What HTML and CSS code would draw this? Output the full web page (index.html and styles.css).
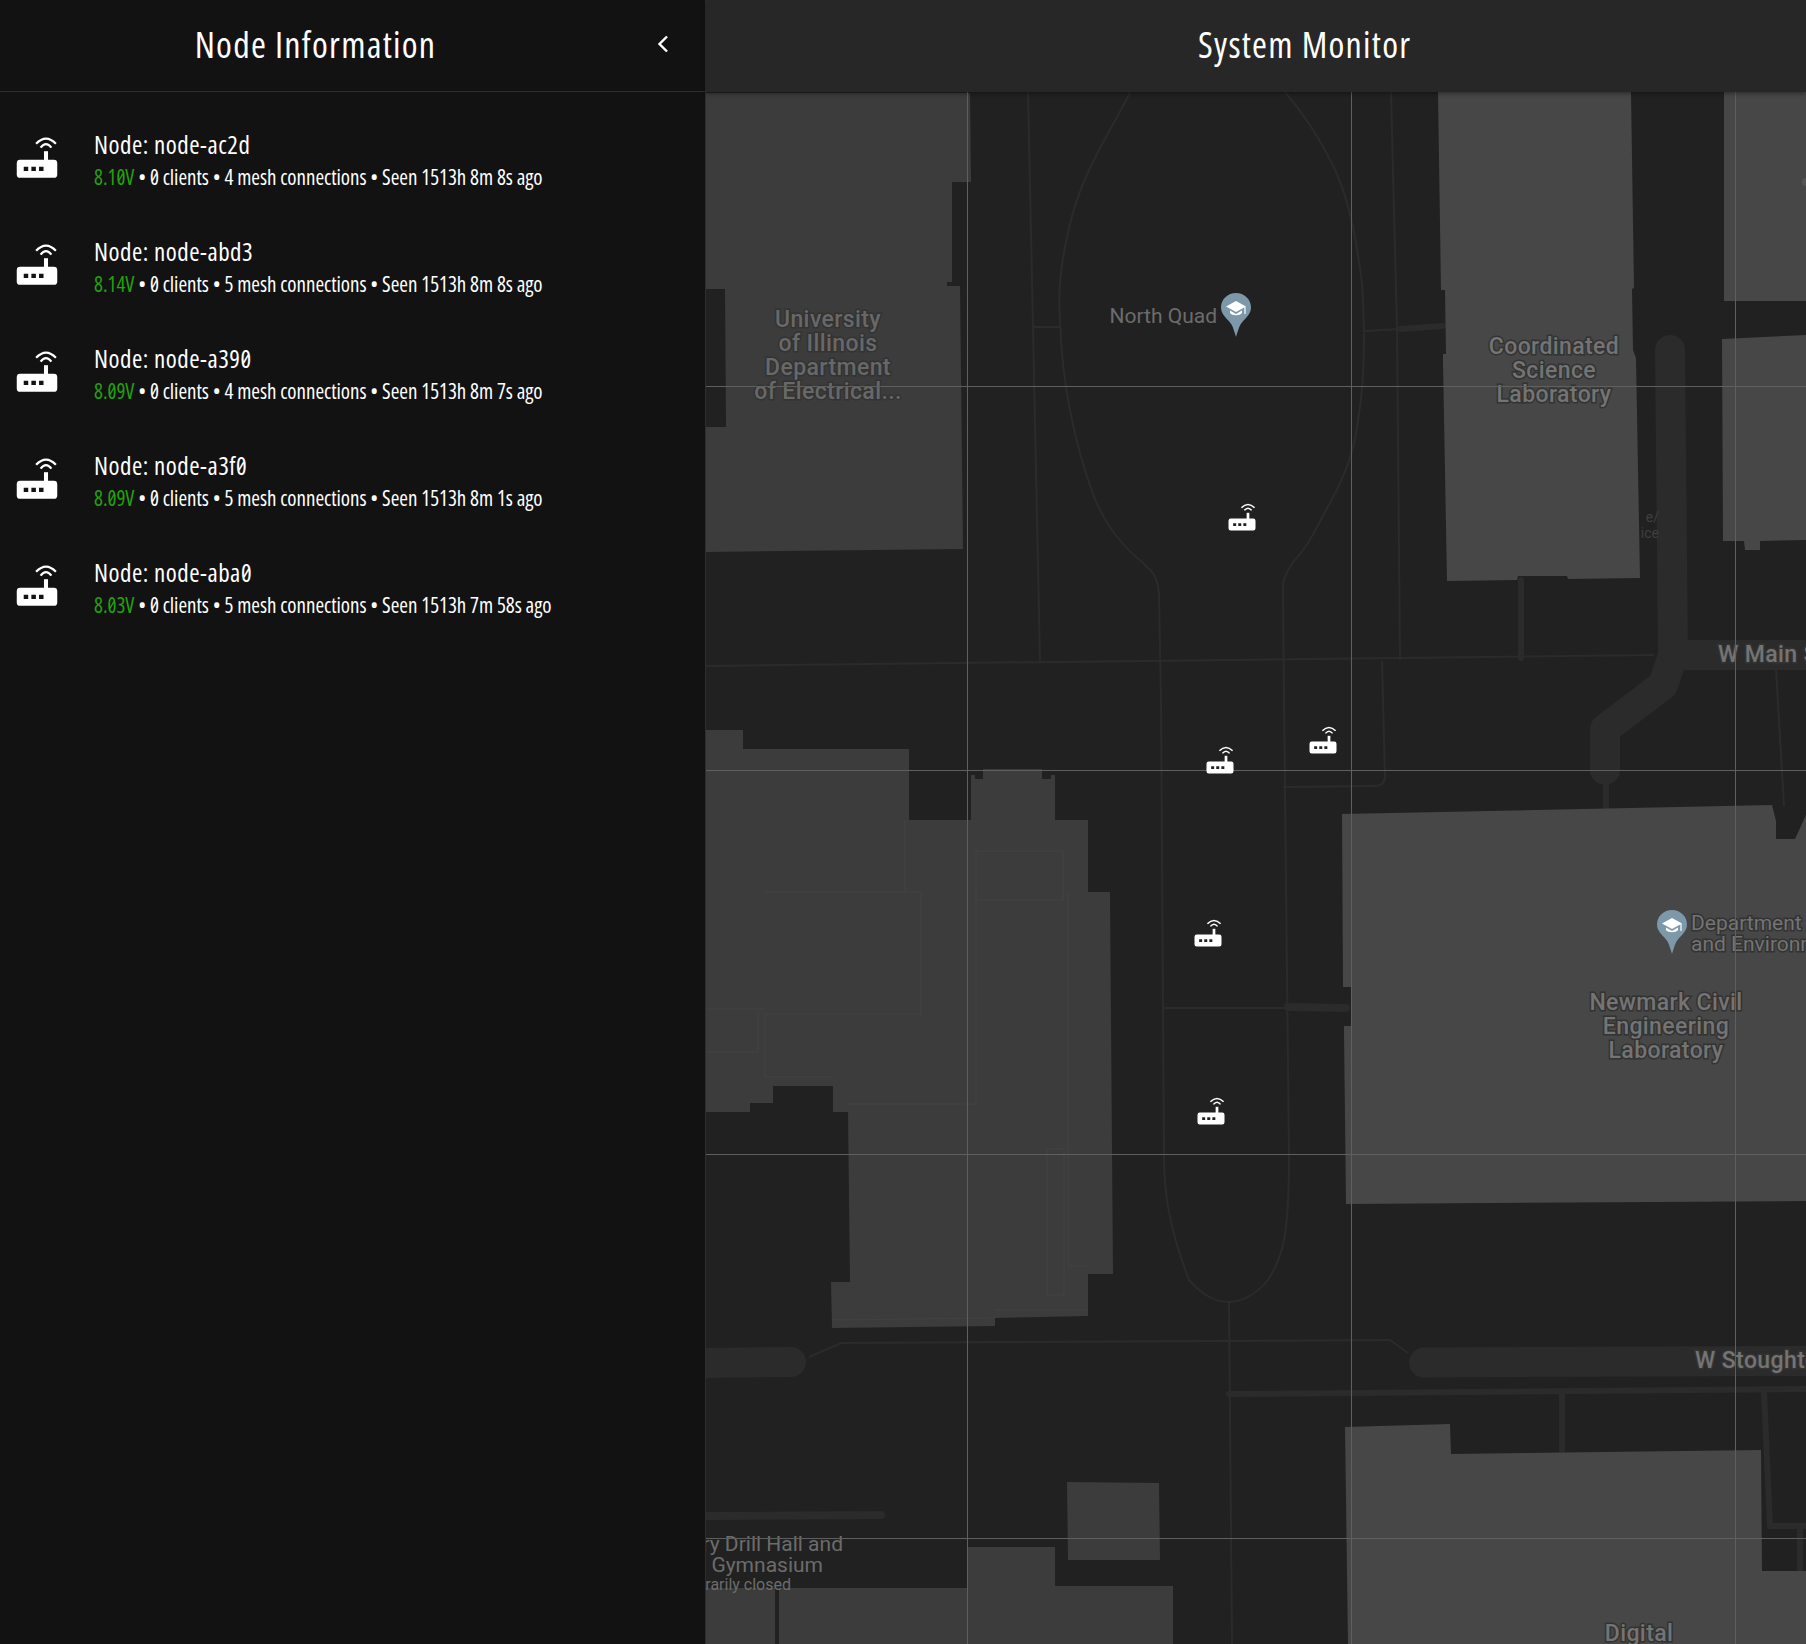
FILE: index.html
```html
<!DOCTYPE html>
<html lang="en">
<head>
  <meta charset="UTF-8" />
  <title>System Monitor</title>
  <link rel="stylesheet" href="styles.css">
</head>
<body>
  <svg class="defs" width="0" height="0">
    <symbol id="router" viewBox="0 0 24 24">
      <path class="wave" d="M11.6 3.9Q16 -0.7 20.4 3.9" />
      <path class="wave" d="M13.6 5.6Q16 2.6 18.4 5.6" />
      <rect x="15.1" y="7.2" width="1.8" height="4.5" fill="#fff" />
      <path fill="#fff" fill-rule="evenodd" d="M4.5 11H19.5A1.5 1.5 0 0 1 21 12.5V17.5A1.5 1.5 0 0 1 19.5 19H4.5A1.5 1.5 0 0 1 3 17.5V12.5A1.5 1.5 0 0 1 4.5 11ZM6.1 14.1V16H8.1V14.1ZM9.5 14.1V16H11.5V14.1ZM12.9 14.1V16H14.9V14.1Z" />
    </symbol>
    <symbol id="school-pin" viewBox="0 0 30 44">
      <path fill="#7d98a8" d="M15 0C23.3 0 30 6.3 30 14.5C30 22 23 26 19.5 31.5C17.8 34.5 16.4 39.5 15 44C13.6 39.5 12.2 34.5 10.5 31.5C7 26 0 22 0 14.5C0 6.3 6.7 0 15 0Z" />
      <path fill="#fff" d="M15 8L25 13.5L15 19L5 13.5Z" />
      <path fill="#fff" d="M9 17.5L15 21L21 17.5V20C19 23 11 23 9 20Z" />
      <rect x="23.4" y="14" width="1.2" height="7" fill="#fff" />
    </symbol>
  </svg>

  <div class="app">
    <aside class="sidebar">
      <header class="side-head">
        <h1>Node Information</h1>
        <button class="collapse" type="button" aria-label="Collapse">
          <svg width="24" height="24" viewBox="0 0 24 24"><path d="M16 4.500L8.500 12L16 19.500" /></svg>
        </button>
      </header>
      <ul class="node-list">
        <li class="node">
          <svg class="node-icon"><use href="#router" /></svg>
          <div class="node-text">
            <div class="node-name">Node: node-ac2d</div>
            <div class="node-info"><span class="volt">8.10V</span> • 0 clients • 4 mesh connections • Seen 1513h 8m 8s ago</div>
          </div>
        </li>
        <li class="node">
          <svg class="node-icon"><use href="#router" /></svg>
          <div class="node-text">
            <div class="node-name">Node: node-abd3</div>
            <div class="node-info"><span class="volt">8.14V</span> • 0 clients • 5 mesh connections • Seen 1513h 8m 8s ago</div>
          </div>
        </li>
        <li class="node">
          <svg class="node-icon"><use href="#router" /></svg>
          <div class="node-text">
            <div class="node-name">Node: node-a390</div>
            <div class="node-info"><span class="volt">8.09V</span> • 0 clients • 4 mesh connections • Seen 1513h 8m 7s ago</div>
          </div>
        </li>
        <li class="node">
          <svg class="node-icon"><use href="#router" /></svg>
          <div class="node-text">
            <div class="node-name">Node: node-a3f0</div>
            <div class="node-info"><span class="volt">8.09V</span> • 0 clients • 5 mesh connections • Seen 1513h 8m 1s ago</div>
          </div>
        </li>
        <li class="node">
          <svg class="node-icon"><use href="#router" /></svg>
          <div class="node-text">
            <div class="node-name">Node: node-aba0</div>
            <div class="node-info"><span class="volt">8.03V</span> • 0 clients • 5 mesh connections • Seen 1513h 7m 58s ago</div>
          </div>
        </li>
      </ul>
    </aside>

    <main class="monitor">
      <header class="top-bar"><h1>System Monitor</h1></header>
      <div class="map">
        <svg class="map-svg" viewBox="706 92 1100 1552" width="1100" height="1552">
          <!-- roads -->
          <g class="road">
            <path class="road-wide" d="M1670 350L1673 655L1663 685L1605 729V770" />
            <path class="road-wide" d="M705 1363L791 1362" />
            <path class="road-wide" d="M1424 1362.500L1806 1361" />
            <path class="road-wide" d="M1676 655H1820" />
            <path class="road-mid" d="M705 1516L881 1515" />
            <path class="road-mid" d="M1288 1007L1346 1008" />
            <path class="road-small" d="M1521 580V658" />
            <path class="road-small" d="M1606 785V809" />
            <path class="road-small" d="M1229 1394L1806 1389" />
            <path class="road-small" d="M1562 1392V1450" />
            <path class="road-small" d="M1764 1392L1770 1526H1806" />
            <path class="road-small" d="M1800 1530V1575" />
            <path class="road-small" d="M1400 329L1443 326" />
          </g>
          <!-- footpaths -->
          <g class="path">
            <path d="M1130 92C1115 125 1085 165 1071 220C1060 265 1058 290 1060 320C1062 385 1075 445 1094 497C1108 530 1125 548 1143 563C1155 573 1158 580 1159 595L1161 700L1164 1156C1164 1190 1168 1225 1189 1280C1200 1292 1212 1302 1229 1302C1245 1302 1260 1290 1268 1280C1282 1258 1289 1240 1289 1156L1284 700L1283 585C1284 575 1290 567 1293 562C1310 545 1320 520 1330 503C1345 475 1355 450 1358 420C1365 380 1365 330 1362 284C1355 225 1345 185 1327 154C1315 130 1300 110 1285 92" />
            <path d="M1028 92L1033 327L1040 662" />
            <path d="M1033 327H1060" />
            <path d="M1391 92L1397 329L1400 660" />
            <path d="M1365 331L1400 329" />
            <path d="M705 666L1654 655" />
            <path d="M1382 661L1385 776Q1385 786 1374 786L1283 787" />
            <path d="M1776 669L1784 806" />
            <path d="M1164 1008H1284" />
            <path d="M1229 1302L1232 1644" />
            <path d="M809 1357L841 1343L1390 1340L1408 1353" />
          </g>
          <!-- buildings -->
          <g class="bld-dim">
            <path d="M705 93L970 93L971 182L952 182L952 282L947 282L947 286L960 286L963 549L705 552Z" />
            <path d="M705 730H743V749H909V820H971V775H975V779H983V769H1042V779H1051V775H1055V820H1088V892H1110L1113 1274H1088V1316L995 1318V1326L832 1328L831 1282H850L848 1112H833V1086H773V1103H750V1112H705Z" />
            <path d="M1067 1482L1159 1483L1160 1560H1068Z" />
            <path d="M967 1547H1055V1586H1173V1644H779V1588H967Z" />
            <path d="M705 1588H775V1644H705Z" />
          </g>
          <path class="gap" d="M705 289H725L726 427H705Z" />
          <g class="bld-lines">
            <path d="M905 820V892M765 892H921V1014H765V1077H833M976 851H1063V900H976ZM976 892V1104H848M1068 892V1266H1088M1047 1149H1064V1295H1047ZM705 1009H765M705 1052H758V1013M995 1310H1088M832 1320L995 1318" />
          </g>
          <text class="poi poi-tiny" x="1659" y="522">e/</text>
          <text class="poi poi-tiny" x="1659" y="538">ice</text>
          <g class="bld">
            <path d="M1438 92H1631L1634 288L1632 289L1633 350L1636 358L1640 578L1568 579L1567 576L1518 576L1517 580L1447 581L1443 362V354H1446L1445 290H1441Z" />
            <path d="M1724 92H1806V301L1724 301Z" />
            <path d="M1722 339L1806 335V540L1760 541V550H1745L1744 541H1723Z" />
            <path d="M1342 814L1772 805L1776 821V839H1795L1806 815V1201L1346 1204L1344 1031V1026H1351V987H1343Z" />
            <path d="M1345 1427L1450 1424L1451 1454L1761 1450L1762 1571H1806V1644H1348Z" />
          </g>
          <circle class="bld-dot" cx="1806" cy="182" r="4" />

          <!-- labels -->
          <g class="label label-dim">
            <text x="828" y="327">University</text>
            <text x="828" y="351">of Illinois</text>
            <text x="828" y="375">Department</text>
            <text x="828" y="399">of Electrical...</text>
          </g>
          <g class="label">
            <text x="1554" y="354">Coordinated</text>
            <text x="1554" y="378">Science</text>
            <text x="1554" y="402">Laboratory</text>
            <text x="1666" y="1010">Newmark Civil</text>
            <text x="1666" y="1034">Engineering</text>
            <text x="1666" y="1058">Laboratory</text>
            <text x="1639" y="1641">Digital</text>
          </g>
          <text class="label-start" x="1718" y="662">W Main St</text>
          <text class="label-start" x="1695" y="1368">W Stoughton Rd</text>
          <text class="label-start label-poi" x="1691" y="930">Department of Civil</text>
          <text class="label-start label-poi" x="1691" y="951">and Environmental</text>
          <text class="poi" x="1217" y="323">North Quad</text>
          <text class="poi poi-end" x="843" y="1551">Armory Drill Hall and</text>
          <text class="poi poi-end" x="823" y="1572">Gymnasium</text>
          <text class="poi poi-end poi-small" x="791" y="1590">Temporarily closed</text>
          <use href="#school-pin" x="1221" y="293" width="30" height="44" />
          <use href="#school-pin" x="1657" y="910" width="30" height="44" />

          <!-- tile seams -->
          <g class="seams">
            <rect x="967" y="92" width="1" height="1552" />
            <rect x="1351" y="92" width="1" height="1552" />
            <rect x="1735" y="92" width="1" height="1552" />
            <rect x="706" y="386" width="1100" height="1" />
            <rect x="706" y="770" width="1100" height="1" />
            <rect x="706" y="1154" width="1100" height="1" />
            <rect x="706" y="1538" width="1100" height="1" />
          </g>

          <!-- nodes -->
          <use href="#router" x="1224" y="502" width="36" height="36" />
          <use href="#router" x="1202" y="745" width="36" height="36" />
          <use href="#router" x="1305" y="725" width="36" height="36" />
          <use href="#router" x="1190" y="918" width="36" height="36" />
          <use href="#router" x="1193" y="1096" width="36" height="36" />
        </svg>
      </div>
    </main>
  </div>
</body>
</html>
```

FILE: styles.css
```css
* { box-sizing: border-box; }
html, body { margin: 0; height: 100%; background: #121212; }
body { font-family: "Open Sans", sans-serif; font-stretch: 75%; font-weight: 400; font-variant-numeric: slashed-zero; color: #fff; overflow: hidden; }
h1 { margin: 0; font-size: 36px; font-weight: 400; letter-spacing: 1.25px; }
.defs { position: absolute; }
.wave { fill: none; stroke: #fff; stroke-width: 1; }

.app { display: flex; height: 100%; }

.sidebar { width: 706px; flex: none; background: #121212; border-right: 1px solid #2e2e2e; }
.side-head { display: flex; align-items: center; height: 92px; padding-bottom: 2px; border-bottom: 1px solid #2e2e2e; }
.side-head h1 { flex: 1; text-align: center; }
.collapse { width: 74px; height: 92px; padding: 0 10px 2px 0; display: flex; align-items: center; justify-content: center; background: none; border: none; }
.collapse path { fill: none; stroke: #fff; stroke-width: 2.4; }

.node-list { list-style: none; margin: 0; padding: 16px 0 0; }
.node { display: flex; align-items: center; height: 107px; padding-left: 10px; }
.node-icon { width: 54px; height: 54px; margin-right: 30px; flex: none; }
.node-text { margin-top: -2px; }
.node-name { font-size: 25px; line-height: 33px; letter-spacing: 0.5px; }
.node-info { font-size: 21px; line-height: 32px; letter-spacing: -0.04px; }
.volt { color: #23a10e; }

.monitor { flex: 1; display: flex; flex-direction: column; min-width: 0; background: #212121; }
.top-bar { height: 92px; flex: none; padding: 0 0 3px 492px; display: flex; align-items: center; background: #272727; box-shadow: 0 2px 4px rgba(0,0,0,0.35); position: relative; z-index: 1; }
.map { flex: 1; overflow: hidden; position: relative; }
.map-svg { display: block; }

.road path { fill: none; stroke: #2b2b2b; stroke-linecap: round; stroke-linejoin: round; }
.road-wide { stroke-width: 30; }
.road-mid { stroke-width: 8; }
.road-small { stroke-width: 6; }
.path path { fill: none; stroke: #2b2b2b; stroke-width: 2; }
.bld-dim { fill: #3c3c3c; }
.bld-lines path { fill: none; stroke: #424242; stroke-width: 1; }
.bld { fill: #474747; }
.bld-dot { fill: #555; }
.gap { fill: #212121; }
.seams { fill: #5f5f5f; }

.label text, .label-start { font-family: Roboto, sans-serif; font-stretch: 100%; font-variant-numeric: normal; font-size: 23px; font-weight: 500; letter-spacing: 0.4px; fill: #747474; stroke: #333; stroke-width: 3px; paint-order: stroke; }
.label text { text-anchor: middle; }
.label-dim text { fill: #686868; }
.label-start.label-poi { font-size: 21px; font-weight: 400; letter-spacing: 0; }
.poi { font-family: Roboto, sans-serif; font-stretch: 100%; font-weight: 400; font-size: 21px; fill: #6c6c6c; text-anchor: end; }
.poi-small { font-size: 16px; }
.poi-tiny { font-size: 14px; fill: #3f3f3f; }
```
